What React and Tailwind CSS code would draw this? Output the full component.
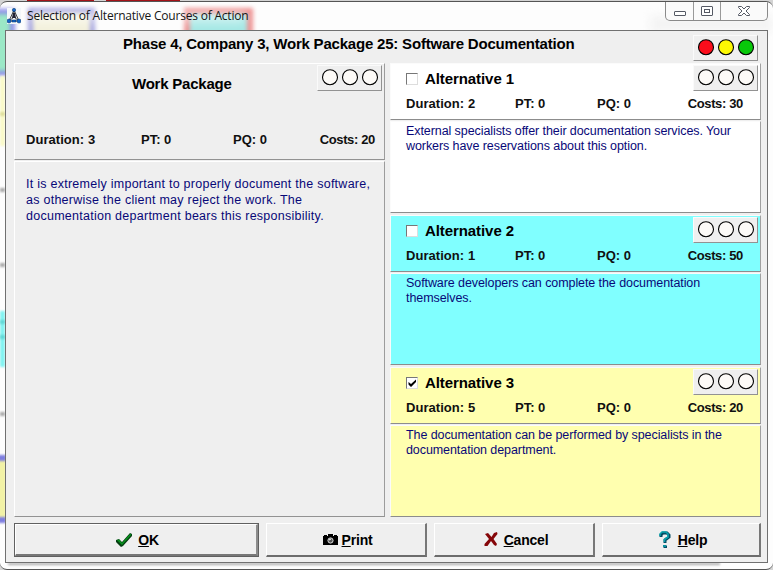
const FONT = 'font-["Liberation_Sans",Arial,sans-serif]';

function Lights({ colors = ['#fcfaf7', '#fcfaf7', '#fcfaf7'] }) {
  return (
    <div className="h-[26px] w-[65px] shrink-0 border border-t-[#fafafa] border-l-[#fafafa] border-r-[#929292] border-b-[#929292] bg-[#efefef]">
      <svg width="63" height="24" viewBox="0 0 63 24">
        {colors.map((c, i) => (
          <circle key={i} cx={12 + i * 20} cy="11.2" r="7.5" fill={c} stroke="#000" strokeWidth="1.100" />
        ))}
      </svg>
    </div>
  );
}

function Stats({ d, c, first = 'w-[109px]', second = 'w-[82px]' }) {
  return (
    <div className="flex h-[16px] text-[13px] leading-[18px] font-bold whitespace-nowrap text-[#101010]">
      <span className={`${first} tracking-[0.05px]`}>Duration: {d}</span>
      <span className={second}>PT: 0</span>
      <span className="flex-1">PQ: 0</span>
      <span className="tracking-[-0.35px]">Costs: {c}</span>
    </div>
  );
}

function Alternative({ n, d, c, checked, bg, lines }) {
  return (
    <section className="flex h-[150px] w-[371px] flex-col gap-px">
      <div className={`flex h-[57px] flex-col border border-t-[#fbfbfb] border-l-[#fbfbfb] border-r-[#a0a0a0] border-b-[#8c8c8c] ${bg}`}>
        <div className="flex h-[31px] items-start pt-px pr-[2px] pl-[15px]">
          <div className="mt-[8px] flex h-[12px] w-[12px] items-center justify-center border border-t-[#777] border-l-[#777] border-r-[#ddd] border-b-[#ddd] bg-white">
            {checked && (
              <svg width="8" height="8" viewBox="0 0 8 8">
                <path d="M.5 3v2.500L3 8l5-5V.5L3 5z" fill="#000" />
              </svg>
            )}
          </div>
          <h2 className="mt-[5px] ml-[7px] flex-1 text-[15px] leading-[18px] font-bold tracking-[-0.08px]">Alternative {n}</h2>
          <Lights />
        </div>
        <div className="pr-[17px] pl-[15px]">
          <Stats d={d} c={c} />
        </div>
      </div>
      <div className={`flex-1 border border-t-[#fbfbfb] border-l-[#fbfbfb] border-r-[#a0a0a0] border-b-[#8c8c8c] pt-[2px] pl-[15px] text-[12.5px] leading-[15px] tracking-[-0.08px] whitespace-nowrap text-[#080878] ${bg}`}>
        {lines.map((l) => <p key={l}>{l}</p>)}
      </div>
    </section>
  );
}

function Button({ width, icon, label, primary }) {
  return (
    <div className={`${width} h-[34px] ${primary ? 'border border-[#606060]' : ''}`}>
      <div className={`flex h-full items-center justify-center border-t border-l border-r-2 border-b-2 border-t-white border-l-white bg-[#efefef] text-[14px] font-bold tracking-[-0.2px] ${primary ? 'border-r-[#8c8c8c] border-b-[#777]' : 'border-r-[#777] border-b-[#6c6c6c]'}`}>
        {icon}
        <span className="leading-[16px]"><span className="underline decoration-1 underline-offset-1">{label[0]}</span>{label.slice(1)}</span>
      </div>
    </div>
  );
}

const CheckIcon = (
  <svg className="mr-[5px] ml-[3px]" width="17" height="16" viewBox="0 0 17 16">
    <path d="M0 8l3-1 3 3L14 1l2 1v2L7 14l-2 1-5-5z" fill="#063f12" />
    <path d="M1 8l2-.5 3 3.500L14 2l1.500 .5L6 13z" fill="#06951d" />
  </svg>
);
const CameraIcon = (
  <svg className="mr-[4px] ml-[3px]" width="15" height="12" viewBox="0 0 15 12">
    <path d="M0 2h1V1h3v1h1V0h5v2h1V1h3v1h1v9H0z" fill="#000" />
    <circle cx="7.500" cy="6.500" r="2.600" fill="#555" stroke="#ddd" />
    <path d="M6 6l2-1" stroke="#fff" />
  </svg>
);
const CrossIcon = (
  <svg className="mr-[6px] ml-[4px]" width="14" height="15" viewBox="0 0 14 15">
    <path d="M1 2l3-1 3.500 4L10 1l3-1 .5 2L9.500 7l3.500 5-1 2-2-1-3-4-3.500 5H0.500v-2L5 7z" fill="#850609" />
  </svg>
);
const HelpIcon = (
  <svg className="mr-[7px] ml-[4px]" width="12" height="18" viewBox="0 0 12 18">
    <path d="M2 6V4l2-2h4l2 2v2L6 9v3" fill="none" stroke="#054c64" strokeWidth="3" />
    <path d="M1 5V3l2-2h4l2 2v3L5.500 8.500V11" fill="none" stroke="#0aa2ad" strokeWidth="1.600" />
    <path d="M4 14h3l1 1v2H5l-1-1z" fill="#054c64" /><path d="M4 14h3v2H4z" fill="#0a91a0" />
  </svg>
);

function Backdrop() {
  return (
    <div className="absolute inset-0 overflow-hidden">
      <div className="absolute top-[9px] left-[-10px] h-[67px] w-[25px] border-[5px] border-[#8b8be8] bg-[#9be8c6] blur-[2px]" />
      <div className="absolute top-[8px] left-[28px] h-[50px] w-[67px] border-[5px] border-[#a3a3e0] bg-[#f3f1dc] blur-[2px]" />
      <div className="absolute top-[8px] left-[184px] h-[50px] w-[69px] border-[6px] border-[#ef9393] bg-[#a5e8e5] blur-[2px]" />
      <div className="absolute top-[11px] left-[30px] h-[12px] w-[216px] rounded-full bg-white/45 blur-[4px]" />
      <div className="absolute top-[76px] left-0 h-[70px] w-[5px] bg-[#fafaca] blur-[1px]" />
      <div className="absolute top-[112px] left-0 h-[4px] w-[5px] bg-[#dede9d] blur-[1px]" />
      <div className="absolute top-[188px] left-0 h-[4px] w-[5px] bg-[#aaa] blur-[1px]" />
      <div className="absolute top-[263px] left-0 h-[4px] w-[5px] bg-[#aaa] blur-[1px]" />
      <div className="absolute top-[311px] left-0 h-[56px] w-[5px] bg-[#83f3f1] blur-[1px]" />
      <div className="absolute top-[320px] left-0 h-[4px] w-[5px] bg-[#61d6d5] blur-[1px]" />
      <div className="absolute top-[335px] left-0 h-[4px] w-[5px] bg-[#61d6d5] blur-[1px]" />
      <div className="absolute top-[412px] left-0 h-[4px] w-[5px] bg-[#aaa] blur-[1px]" />
      <div className="absolute top-[455px] left-[-4px] h-[68px] w-[10px] border-y-[6px] border-[#7e7ee0] bg-[#f2f2a6] blur-[1px]" />
      <div className="absolute top-[563px] left-[8px] h-[2px] w-[712px] bg-[#aaa] blur-[1px]" />
      <div className="absolute top-[16px] left-[650px] h-[16px] w-[123px] bg-[#f3f3f3] blur-[5px]" />
    </div>
  );
}

export default function App() {
  return (
    <div className={`relative h-[570px] w-[773px] overflow-hidden bg-[#d4d4d4] text-black ${FONT}`}>
      <div className="absolute top-0 left-[27px] h-px w-[67px] bg-[#a51218]" />
      <div className="absolute top-0 left-[106px] h-px w-[74px] bg-[#a51218]" />
      <div className="relative mt-px h-[569px] w-full overflow-hidden rounded-[7px] border-t border-b border-[#555] bg-[#fdfdfd]">
        <div className="absolute -top-[2px] left-0 h-[570px] w-full"><Backdrop /></div>
        <div className="relative flex h-[28px] items-start pl-[7px]">
          <svg className="mt-[6px]" width="14" height="16" viewBox="0 0 14 16">
            <path d="M0 0h14v16H0z" fill="#f4f7fa" />
            <path d="M7 2L2 13h10z M7 2v7l-5 4M7 9l5 4" fill="none" stroke="#111" strokeWidth=".8" />
            <path d="M6 5h2l1 5H5z" fill="#223" />
            <g fill="#1266c8" stroke="#062d65" strokeWidth=".5"><circle cx="7" cy="2" r="1.700" /><circle cx="2" cy="13" r="2" /><circle cx="12" cy="13" r="2" /><path d="M5 12h4v2H5z" /></g>
          </svg>
          <span className="mt-[5px] ml-[6px] flex-1 font-['Open_Sans','Noto_Sans',sans-serif] text-[12px] leading-[17px] tracking-[-0.2px] whitespace-nowrap text-[#151515]">Selection of Alternative Courses of Action</span>
          <div className="mr-[5px] flex h-[19px] w-[103px] divide-x divide-[#999] rounded-b-[5px] border border-t-0 border-[#8a8a8a] bg-[#fafafa]">
            <div className="flex w-[28px] justify-center pt-[9px]"><i className="h-[5px] w-[12px] rounded-[1px] border border-[#555964] bg-white" /></div>
            <div className="flex w-[27px] justify-center pt-[4px]"><i className="flex h-[10px] w-[12px] items-center justify-center rounded-[1px] border border-[#555964] bg-white"><i className="h-[4px] w-[6px] border border-[#555964]" /></i></div>
            <div className="flex flex-1 justify-center pt-[4px]"><svg width="12" height="10" viewBox="0 0 12 10"><path d="M.5.500h3L6 3 8.500.500h3v1L8 5l3.500 3.500v1h-3L6 7 3.500 9.500h-3v-1L4 5 .5 1.500z" fill="#fff" stroke="#555964" /></svg></div>
          </div>
        </div>
        <main className="relative ml-[5px] flex h-[533px] w-[763px] flex-col border border-[#707070] bg-[#efefef] pl-[8px]">
          <header className="flex h-[32px] items-start">
            <h1 className="mt-[4px] ml-[109px] flex-1 text-[15px] leading-[18px] font-bold tracking-[-0.2px] whitespace-nowrap">Phase 4, Company 3, Work Package 25: Software Documentation</h1>
            <div className="mt-[4px] mr-[9px]"><Lights colors={['#fb0d1b', '#fcf803', '#08c80a']} /></div>
          </header>
          <div className="flex gap-[5px]">
            <section className="flex h-[454px] w-[371px] flex-col gap-px">
              <div className="h-[97px] border border-t-white border-l-white border-r-[#9c9c9c] border-b-[#929292]">
                <div className="flex h-[67px] pt-px pr-[2px]">
                  <h2 className="mt-[10px] ml-[117px] flex-1 text-[15px] leading-[18px] font-bold tracking-[-0.22px]">Work Package</h2>
                  <Lights />
                </div>
                <div className="pr-[9px] pl-[11px]"><Stats d={3} c={20} first="w-[115px]" second="w-[92px]" /></div>
              </div>
              <div className="flex-1 border border-t-white border-l-white border-r-[#9c9c9c] border-b-[#929292] pt-[14px] pl-[11px] text-[12.5px] leading-[16px] tracking-[0.26px] whitespace-nowrap text-[#080878]">
                <p>It is extremely important to properly document the software,</p>
                <p>as otherwise the client may reject the work. The</p>
                <p>documentation department bears this responsibility.</p>
              </div>
            </section>
            <div className="flex flex-col gap-[2px]">
              <Alternative n={1} d={2} c={30} bg="bg-white" lines={['External specialists offer their documentation services. Your', 'workers have reservations about this option.']} />
              <Alternative n={2} d={1} c={50} bg="bg-[#80ffff]" lines={['Software developers can complete the documentation', 'themselves.']} />
              <Alternative n={3} d={5} c={20} checked bg="bg-[#ffffaf]" lines={['The documentation can be performed by specialists in the', 'documentation department.']} />
            </div>
          </div>
          <footer className="mt-[6px] flex gap-[7px]">
            <Button width="w-[245px]" primary icon={CheckIcon} label="OK" />
            <Button width="w-[161px]" icon={CameraIcon} label="Print" />
            <Button width="w-[161px]" icon={CrossIcon} label="Cancel" />
            <Button width="w-[159px]" icon={HelpIcon} label="Help" />
          </footer>
        </main>
      </div>
    </div>
  );
}
